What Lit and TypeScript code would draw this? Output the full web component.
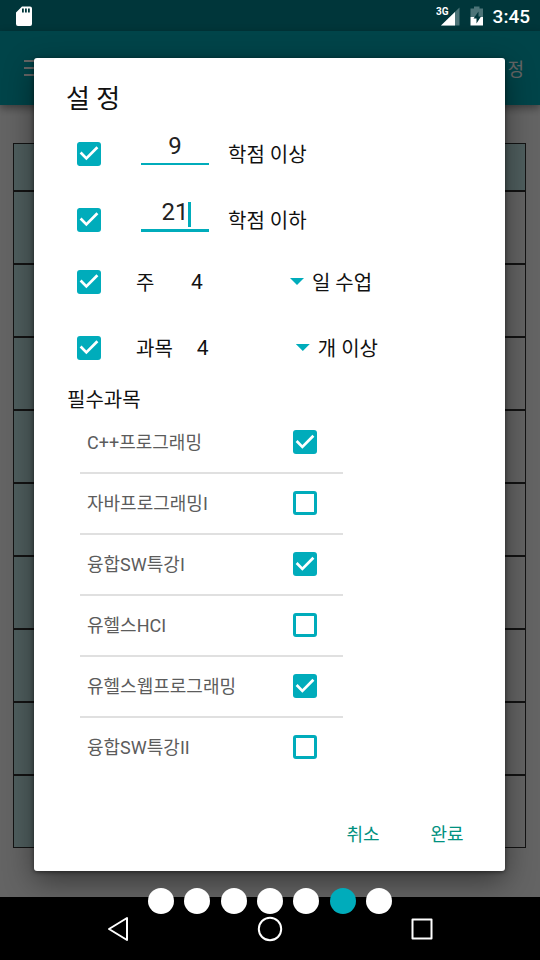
import { LitElement, html, css, svg } from "lit";
import { customElement, state } from "lit/decorators.js";
import { classMap } from "lit/directives/class-map.js";

interface Course {
  name: string;
  required: boolean;
}

@customElement("status-bar")
class StatusBar extends LitElement {
  static styles = css`
    :host {
      display: flex;
      align-items: center;
      justify-content: space-between;
      height: 31px;
      padding: 0 10px 0 16px;
      background: #00363a;
      color: #fff;
      font-family: Roboto, "Noto Sans CJK KR", sans-serif;
    }
    svg {
      display: block;
    }
    .right {
      display: flex;
      align-items: center;
    }
    .battery {
      margin: 0 9px 0 10px;
    }
    .time {
      font-size: 19px;
      font-weight: 500;
      line-height: 31px;
      padding-top: 2px;
    }
    .network {
      font-size: 10px;
      font-weight: 700;
    }
  `;

  render() {
    return html`
      <svg width="16" height="20" viewBox="0 0 16 20" aria-label="SD">
        <path
          fill="#fff"
          fill-rule="evenodd"
          d="M6 .5h8a2 2 0 0 1 2 2v15.500a2 2 0 0 1-2 2H2a2 2 0 0 1-2-2V6.500zM6 2.500v4h1.800v-4zM9 2.500v4h1.800v-4zM12 2.500v4h1.800v-4z"
        />
      </svg>
      <div class="right">
        <svg width="24" height="20" viewBox="0 0 24 20">
          <path d="M23.500 1.500V19.500H5z" fill="#4d7478" />
          <path d="M19 6v13.500H5z" fill="#fff" />
          <text class="network" x="0" y="9" fill="#fff">3G</text>
        </svg>
        <svg class="battery" width="14" height="20" viewBox="0 0 14 20">
          <path d="M4 .5h5.500v2H13V11H.5V2.500H4z" fill="#4d7478" />
          <path d="M.5 11H13v8.500H.5z" fill="#fff" />
          <path d="M8.500 5.500L3.500 12.500h3v5l4.500-7H8.500z" fill="#00363a" />
        </svg>
        <span class="time">3:45</span>
      </div>
    `;
  }
}

@customElement("timetable-page")
class TimetablePage extends LitElement {
  static styles = css`
    :host {
      display: block;
      background: #fafafa;
      font-family: Roboto, "Noto Sans CJK KR", sans-serif;
    }
    header {
      display: flex;
      align-items: center;
      justify-content: space-between;
      height: 74px;
      box-sizing: border-box;
      padding: 0 16px 0 24px;
      background: #00aab6;
      color: #fff;
      font-size: 18px;
      box-shadow: 0 3px 8px rgba(0, 0, 0, 0.4);
    }
    button {
      border: 0;
      padding: 0;
      background: none;
      color: inherit;
      font: inherit;
    }
    .menu {
      display: grid;
      gap: 5px;
      width: 24px;
    }
    .menu span {
      height: 2px;
      background: #fff;
    }
    .body {
      padding: 38px 14px 49px 13px;
    }
    table {
      width: 100%;
      border-spacing: 0;
      table-layout: fixed;
    }
    th,
    td {
      box-sizing: border-box;
      height: 73px;
      padding: 0;
      border: 1px solid #303030;
    }
    thead th {
      height: 48px;
    }
    th {
      background: #c6eaec;
    }
  `;

  render() {
    const days = [1, 2, 3, 4, 5];
    const periods = [1, 2, 3, 4, 5, 6, 7, 8, 9];
    return html`
      <header>
        <button class="menu" aria-label="메뉴"><span></span><span></span><span></span></button>
        <button>설 정</button>
      </header>
      <div class="body">
        <table>
          <thead>
            <tr>
              <th></th>
              ${days.map(() => html`<th></th>`)}
            </tr>
          </thead>
          <tbody>
            ${periods.map(
              () => html`<tr>
                <th></th>
                ${days.map(() => html`<td></td>`)}
              </tr>`
            )}
          </tbody>
        </table>
      </div>
    `;
  }
}

@customElement("settings-dialog")
class SettingsDialog extends LitElement {
  @state() private courses: Course[] = [
    { name: "C++프로그래밍", required: true },
    { name: "자바프로그래밍I", required: false },
    { name: "융합SW특강I", required: true },
    { name: "유헬스HCI", required: false },
    { name: "유헬스웹프로그래밍", required: true },
    { name: "융합SW특강II", required: false },
  ];

  static styles = css`
    :host {
      display: block;
      box-sizing: border-box;
      padding: 25px 0 12px;
      border-radius: 3px;
      background: #fff;
      color: #111;
      font-family: Roboto, "Noto Sans CJK KR", sans-serif;
      font-size: 20px;
      line-height: 24px;
      box-shadow: 0 10px 30px rgba(0, 0, 0, 0.45), 0 1px 4px rgba(0, 0, 0, 0.5);
    }
    h1 {
      margin: 0 32px 15px;
      font-size: 26px;
      font-weight: 400;
      line-height: 32px;
    }
    h2 {
      margin: 16px 33px 0;
      font-size: 20px;
      font-weight: 400;
      line-height: 24px;
    }
    .group {
      display: grid;
      gap: 18px;
      margin: 0 43px 14px;
    }
    .row {
      display: flex;
      align-items: center;
      height: 48px;
    }
    input[type="checkbox"] {
      appearance: none;
      flex: none;
      width: 24px;
      height: 24px;
      margin: 0;
      border: 3px solid #00acbb;
      border-radius: 3px;
      background: #fff;
    }
    input[type="checkbox"]:checked {
      border: 0;
      background: #00acbb;
    }
    input[type="checkbox"]:checked::before {
      content: "";
      display: block;
      width: 24px;
      height: 24px;
      background: #fff;
      clip-path: polygon(39% 78%, 11% 50%, 19% 42%, 39% 62%, 81% 20%, 89% 28%);
    }
    .field {
      position: relative;
      align-self: flex-start;
      width: 68px;
      margin: 0 19px 0 40px;
      border-bottom: 2px solid #00acbb;
    }
    .field.active {
      border-bottom-width: 3px;
    }
    .field input {
      display: block;
      box-sizing: border-box;
      width: 100%;
      height: 33px;
      padding: 0;
      border: 0;
      outline: 0;
      background: none;
      color: #222;
      font: 24px/33px Roboto, sans-serif;
      text-align: center;
    }
    .caret {
      position: absolute;
      top: 6px;
      left: calc(50% + 13px);
      width: 3px;
      height: 25px;
      background: #00acbb;
    }
    .unit {
      min-width: 31px;
      margin: 0 24px 0 35px;
    }
    .choice {
      display: flex;
      align-items: center;
      width: 113px;
      margin-right: 8px;
    }
    select {
      appearance: none;
      flex: 1;
      min-width: 0;
      padding: 0;
      border: 0;
      background: none;
      color: inherit;
      font: inherit;
      font-size: 21px;
    }
    .arrow {
      width: 14px;
      height: 7px;
      background: #00acbb;
      clip-path: polygon(0 0, 100% 0, 50% 100%);
    }
    ul {
      width: 263px;
      margin: 1px 46px 0;
      padding: 0;
      list-style: none;
      color: #5c5c5c;
      font-size: 18px;
    }
    li {
      border-bottom: 2px solid #e0e0e0;
    }
    li:last-child {
      border-color: transparent;
    }
    li label {
      display: flex;
      align-items: center;
      justify-content: space-between;
      height: 59px;
      padding: 0 26px 0 7px;
    }
    .actions {
      display: flex;
      justify-content: flex-end;
      margin: 32px 16px 0;
    }
    .actions button {
      width: 84px;
      height: 48px;
      padding: 0;
      border: 0;
      background: none;
      color: #009180;
      font: inherit;
      font-size: 18px;
    }
    .row > label,
    .row > span,
    li span {
      padding-top: 2px;
    }
  `;

  private creditRow(value: string, text: string, active: boolean) {
    return html`<div class="row">
      <input type="checkbox" aria-label=${text} checked />
      <div class=${classMap({ field: true, active })}>
        <input type="text" id=${"credit" + value} .value=${value} />
        ${active ? html`<span class="caret"></span>` : null}
      </div>
      <label for=${"credit" + value}>${text}</label>
    </div>`;
  }

  private choiceRow(id: string, unit: string, text: string) {
    return html`<div class="row">
      <input type="checkbox" aria-label=${unit} checked />
      <label class="unit" for=${id}>${unit}</label>
      <div class="choice">
        <select id=${id}>
          <option>4</option>
        </select>
        <span class="arrow"></span>
      </div>
      <span>${text}</span>
    </div>`;
  }

  private toggle(index: number) {
    this.courses = this.courses.map((c, i) => (i === index ? { ...c, required: !c.required } : c));
  }

  render() {
    return html`
      <h1>설 정</h1>
      <div class="group">
        ${this.creditRow("9", "학점 이상", false)} ${this.creditRow("21", "학점 이하", true)}
      </div>
      <div class="group">
        ${this.choiceRow("days", "주", "일 수업")} ${this.choiceRow("subjects", "과목", "개 이상")}
      </div>
      <h2>필수과목</h2>
      <ul>
        ${this.courses.map(
          (c, i) => html`<li>
            <label>
              <span>${c.name}</span>
              <input type="checkbox" .checked=${c.required} @change=${() => this.toggle(i)} />
            </label>
          </li>`
        )}
      </ul>
      <div class="actions"><button>취소</button><button>완료</button></div>
    `;
  }
}

@customElement("navigation-bar")
class NavigationBar extends LitElement {
  static styles = css`
    :host {
      display: flex;
      height: 63px;
      box-sizing: border-box;
      padding: 0 42px;
      background: #000;
    }
    button {
      display: grid;
      place-items: center;
      flex: 1;
      padding: 0;
      border: 0;
      background: none;
    }
  `;

  private icon(label: string, shape: unknown) {
    return html`<button aria-label=${label}>
      <svg width="26" height="26" viewBox="0 0 26 26" fill="none" stroke="#fff" stroke-linejoin="round">
        ${shape}
      </svg>
    </button>`;
  }

  render() {
    return html`
      ${this.icon("뒤로", svg`<path d="M22 2v22L4 13z" stroke-width="2" />`)}
      ${this.icon("홈", svg`<circle cx="13" cy="13" r="11.200" stroke-width="2" />`)}
      ${this.icon("최근", svg`<path d="M3.500 3.500h19v19h-19z" stroke-width="2" />`)}
    `;
  }
}

@customElement("app-root")
class AppRoot extends LitElement {
  static styles = css`
    :host {
      display: flex;
      flex-direction: column;
      position: relative;
      min-height: 100vh;
    }
    timetable-page {
      flex: 1;
    }
    .scrim {
      position: absolute;
      inset: 31px 0 63px;
      display: flex;
      align-items: center;
      padding: 0 35px 0 34px;
      background: rgba(0, 0, 0, 0.6);
      overflow: hidden;
    }
    settings-dialog {
      flex: 1;
    }
    .pages {
      position: absolute;
      right: 0;
      bottom: 46px;
      left: 0;
      display: flex;
      justify-content: space-between;
      width: 244px;
      margin: 0 auto;
    }
    .dot {
      width: 26px;
      height: 26px;
      border-radius: 50%;
      background: #fff;
    }
    .dot.current {
      background: #00acbb;
    }
  `;

  render() {
    return html`
      <status-bar></status-bar>
      <timetable-page></timetable-page>
      <navigation-bar></navigation-bar>
      <div class="scrim"><settings-dialog role="dialog" aria-label="설정"></settings-dialog></div>
      <div class="pages">
        ${[0, 1, 2, 3, 4, 5, 6].map((i) => html`<span class=${classMap({ dot: true, current: i === 5 })}></span>`)}
      </div>
    `;
  }
}
